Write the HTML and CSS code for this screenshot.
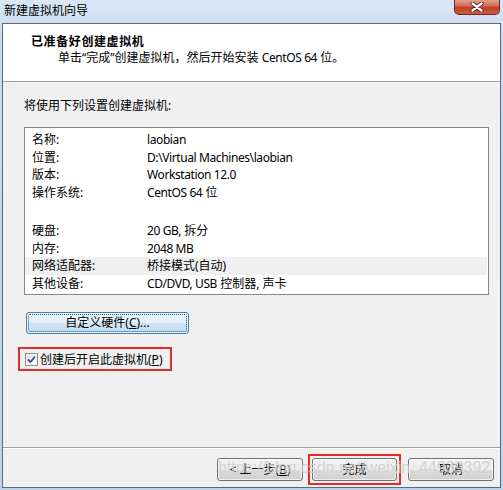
FILE: index.html
```html
<!DOCTYPE html>
<html lang="zh">
<head>
<meta charset="utf-8">
<title>新建虚拟机向导</title>
<link rel="stylesheet" href="styles.css">
</head>
<body>
<div class="window">
  <div class="titlebar">
    <span class="title">新建虚拟机向导</span>
    <span class="close">
      <svg width="14" height="10" viewBox="0 0 14 10"><path d="M2.5 1.5 L11.5 8.5 M11.5 1.5 L2.5 8.5" stroke="#3b1a14" stroke-width="4" stroke-linecap="round"/><path d="M2.5 1.5 L11.5 8.5 M11.5 1.5 L2.5 8.5" stroke="#ffffff" stroke-width="2.4" stroke-linecap="round"/></svg>
    </span>
  </div>
  <div class="client">
    <div class="header">
      <div class="h-title">已准备好创建虚拟机</div>
      <div class="h-sub">单击“完成”创建虚拟机，然后开始安装 <span class="lat">CentOS 64</span> 位。</div>
    </div>
    <div class="content">
      <div class="lead">将使用下列设置创建虚拟机:</div>
      <div class="listbox">
        <div class="row"><span class="k">名称:</span><span class="v lat">laobian</span></div>
        <div class="row"><span class="k">位置:</span><span class="v lat">D:\Virtual Machines\laobian</span></div>
        <div class="row"><span class="k">版本:</span><span class="v lat">Workstation 12.0</span></div>
        <div class="row"><span class="k">操作系统:</span><span class="v"><span class="lat">CentOS 64</span> 位</span></div>
        <div class="spacer"></div>
        <div class="row"><span class="k">硬盘:</span><span class="v"><span class="lat">20 GB,</span> 拆分</span></div>
        <div class="row"><span class="k">内存:</span><span class="v lat">2048 MB</span></div>
        <div class="row alt"><span class="k">网络适配器:</span><span class="v">桥接模式(自动)</span></div>
        <div class="row"><span class="k">其他设备:</span><span class="v"><span class="lat">CD/DVD, USB</span> 控制器, 声卡</span></div>
      </div>
      <div class="btn-row">
        <button class="btn custom">自定义硬件(<u>C</u>)...</button>
      </div>
      <label class="check-wrap">
        <span class="checkbox">
          <svg width="9" height="9" viewBox="0 0 9 9"><path d="M1 4.5 L3.5 7 L8 1.5" fill="none" stroke="#2f4f94" stroke-width="1.8"/></svg>
        </span>
        <span>创建后开启此虚拟机(<u>P</u>)</span>
      </label>
    </div>
    <div class="footer">
      <button class="btn nav">&lt; 上一步(<u>B</u>)</button>
      <span class="mark"><button class="btn nav">完成</button></span>
      <button class="btn nav cancel">取消</button>
      <div class="watermark">https://blog.csdn.net/weixin_44939392</div>
    </div>
  </div>
</div>
</body>
</html>
```

FILE: styles.css
```css
html, body {
  margin: 0;
  padding: 0;
}
body {
  width: 503px;
  height: 490px;
  overflow: hidden;
  font-family: "Noto Sans", "Noto Sans CJK SC", sans-serif;
  font-size: 12px;
  color: #000;
}
.lat {
  letter-spacing: -0.4px;
}
.window {
  width: 503px;
  height: 490px;
  box-sizing: border-box;
  display: flex;
  flex-direction: column;
  background: linear-gradient(to bottom, #d9e6f5 0px, #c8dbf0 40px, #bcd3ee 100%);
}
.titlebar {
  height: 23px;
  display: flex;
  justify-content: space-between;
  align-items: flex-start;
  flex: none;
}
.title {
  margin: 4px 0 0 4px;
  line-height: 14px;
  color: #000;
}
.close {
  width: 46px;
  height: 16px;
  margin-right: 3px;
  margin-top: -1px;
  box-sizing: border-box;
  border: 1px solid #6b2a22;
  border-top: none;
  border-radius: 0 0 5px 5px;
  background: linear-gradient(to bottom, #e7a595 0%, #d2705c 45%, #c0412a 55%, #cc5a3f 100%);
  display: flex;
  align-items: center;
  justify-content: center;
}
.client {
  flex: 1;
  margin: 0 2px 2px 2px;
  border: 1px solid #5a6b80;
  background: #f0f0f0;
  display: flex;
  flex-direction: column;
  position: relative;
}
.header {
  height: 47px;
  background: #fff;
  border-bottom: 1px solid #a0a0a0;
  padding: 10px 0 0 28px;
  flex: none;
}
.h-title {
  font-weight: bold;
  line-height: 16px;
  letter-spacing: 0.6px;
}
.h-sub {
  line-height: 16px;
  padding-left: 27px;
}
.content {
  flex: 1;
  padding: 16px 0 0 21px;
  display: flex;
  flex-direction: column;
  align-items: flex-start;
}
.lead {
  line-height: 16px;
}
.listbox {
  margin-top: 13px;
  width: 465px;
  height: 168px;
  box-sizing: border-box;
  border: 1px solid #828790;
  background: #fff;
  padding: 3px 1px 0 0;
}
.row {
  display: flex;
  height: 17.5px;
  line-height: 17.5px;
  padding-left: 7px;
}
.row.alt {
  background: #f0f0f0;
}
.k {
  width: 115px;
  flex: none;
}
.spacer {
  height: 21px;
}
.btn {
  font: inherit;
  color: #000;
  padding: 0;
  box-sizing: border-box;
  border: 1px solid #707070;
  border-radius: 3px;
  background: linear-gradient(to bottom, #f2f2f2 0%, #ebebeb 50%, #dddddd 50%, #cfcfcf 100%);
  box-shadow: inset 0 0 0 1px rgba(255,255,255,0.7);
  line-height: 18px;
}
.btn-row {
  margin: 17px 0 0 2px;
}
.custom {
  width: 163px;
  height: 22px;
  border-color: #3c7fb1;
  background: linear-gradient(to bottom, #eef6fc 0%, #e1eef9 50%, #cfe4f5 50%, #c4ddf2 100%);
  position: relative;
}
.custom::after {
  content: "";
  position: absolute;
  inset: 1px;
  border: 1px dotted #1f4f7a;
  border-radius: 2px;
}
.check-wrap {
  margin: 13px 0 0 -6px;
  width: 154px;
  height: 24px;
  box-sizing: border-box;
  border: 2px solid #e52a2a;
  display: flex;
  align-items: center;
  padding-left: 5px;
  gap: 2px;
}
.checkbox {
  width: 13px;
  height: 13px;
  box-sizing: border-box;
  border: 1px solid #8f8f8f;
  background: linear-gradient(135deg, #dcdcdc, #ffffff);
  display: flex;
  align-items: center;
  justify-content: center;
  box-shadow: inset 0 0 0 1px #f4f4f4;
}
.footer {
  height: 40px;
  box-sizing: border-box;
  border-top: 1px solid #a0a0a0;
  box-shadow: inset 0 1px 0 #ffffff;
  display: flex;
  align-items: flex-start;
  padding: 10px 6px 0 0;
  justify-content: flex-end;
  position: relative;
  flex: none;
}
.nav {
  width: 86px;
  height: 23px;
}
.mark {
  margin-left: 9px;
  outline: 2px solid #e52a2a;
  outline-offset: 2px;
  display: flex;
}
.mark .nav {
  width: 85px;
}
.cancel {
  margin-left: 11px;
}
.watermark {
  position: absolute;
  left: 215px;
  top: 10px;
  font-family: "Liberation Sans", Arial, sans-serif;
  font-size: 16px;
  line-height: 20px;
  color: rgba(170, 170, 170, 0.5);
  text-shadow: 0 0 1px rgba(255,255,255,0.8);
  pointer-events: none;
  white-space: nowrap;
}
```
